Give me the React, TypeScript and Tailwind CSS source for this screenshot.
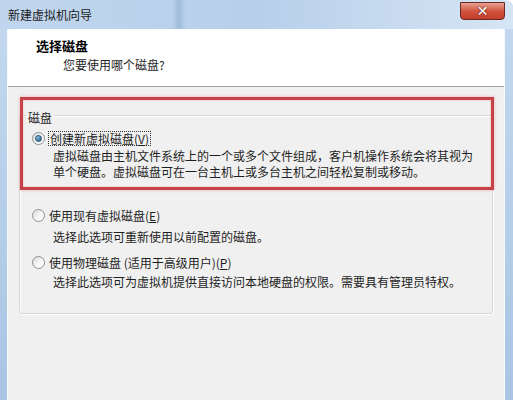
import React from 'react';

const cjk = { fontFamily: '"Noto Sans CJK SC", "Noto Sans", sans-serif' };

const Radio = ({ checked }: { checked?: boolean }) => (
  <span className="relative flex h-[13px] w-[13px] shrink-0 items-center justify-center rounded-full border border-[#8f8f8f] bg-gradient-to-br from-[#d8d8d8] via-[#f4f4f4] to-[#ffffff]">
    {checked && (
      <span className="h-[7px] w-[7px] rounded-full border border-[#1c4a6a] bg-gradient-to-br from-[#9ad0f0] to-[#1d5f8c]" />
    )}
  </span>
);

export default function App() {
  return (
    <div className="flex h-[400px] w-[513px] flex-col overflow-hidden rounded-tr-[8px] bg-gradient-to-b from-[#c4d9ef] to-[#a9c5e3] text-[12px] text-[#1e1e1e]" style={cjk}>
      {/* title bar */}
      <div className="relative flex h-[29px] shrink-0 items-center bg-gradient-to-r from-[#c0d6ee] via-[#b7cfea] to-[#d6e5f4] pl-[8px]">
        <div className="absolute left-[172px] top-0 h-full w-[14px] bg-gradient-to-r from-transparent via-[#9fbbdb] to-transparent" />
        <span className="relative leading-[15px] text-[#1b1b1b]">新建虚拟机向导</span>
        <div className="ml-auto mr-[8px] flex h-[18px] w-[45px] -translate-y-[4px] items-center justify-center rounded-b-[4px] border border-[#6b2a22] bg-gradient-to-b from-[#e9a192] via-[#d0543f] to-[#c23d2a]">
          <span className="text-[14px] font-bold leading-none text-white [text-shadow:0_0_2px_#4a1a14]" style={{ fontFamily: '"DejaVu Sans", sans-serif' }}>✕</span>
        </div>
      </div>

      {/* client area */}
      <div className="relative mx-[7px] mr-[8px] flex flex-1 flex-col border-x border-[#f7fafd] bg-[#f0f0f0]">
        <div className="h-[58px] shrink-0 border-b border-[#a0a0a0] bg-white">
          <div className="pl-[28px] pt-[9px] text-[13px] font-bold leading-[15px] text-black">选择磁盘</div>
          <div className="pl-[55px] pt-[4px] leading-[15px]">您要使用哪个磁盘?</div>
        </div>

        <fieldset className="mx-[11px] mt-[19px] h-[208px] rounded-[3px] border border-[#d5d5d5] shadow-[inset_1px_1px_0_#ffffff,1px_1px_0_#ffffff]">
          <legend className="ml-[6px] px-[2px] pt-[4px] leading-[15px]">磁盘</legend>

          <div className="ml-[12px] mt-[6px] flex h-[15px] items-center">
            <Radio checked />
            <span className="ml-[3px] border border-dotted border-[#333] px-[1px] leading-[13px]">
              创建新虚拟磁盘(<span className="underline">V</span>)
            </span>
          </div>
          <div className="ml-[33px] mt-[2px] leading-[16px]">
            <div>虚拟磁盘由主机文件系统上的一个或多个文件组成，客户机操作系统会将其视为</div>
            <div>单个硬盘。虚拟磁盘可在一台主机上或多台主机之间轻松复制或移动。</div>
          </div>

          <div className="ml-[12px] mt-[28px] flex h-[15px] items-center">
            <Radio />
            <span className="ml-[4px] leading-[15px]">
              使用现有虚拟磁盘(<span className="underline">E</span>)
            </span>
          </div>
          <div className="ml-[33px] mt-[6px] leading-[15px]">选择此选项可重新使用以前配置的磁盘。</div>

          <div className="ml-[12px] mt-[11px] flex h-[15px] items-center">
            <Radio />
            <span className="ml-[4px] leading-[15px]">
              使用物理磁盘 (适用于高级用户)(<span className="underline">P</span>)
            </span>
          </div>
          <div className="ml-[33px] mt-[4px] leading-[15px]">选择此选项可为虚拟机提供直接访问本地硬盘的权限。需要具有管理员特权。</div>
        </fieldset>

        {/* annotation highlight */}
        <div className="pointer-events-none absolute left-[12px] top-[68px] h-[93px] w-[474px] border-[3px] border-[#c4434b] shadow-[0_0_3px_#f3a5aa,inset_0_0_2px_#f3a5aa]" />
      </div>
    </div>
  );
}
